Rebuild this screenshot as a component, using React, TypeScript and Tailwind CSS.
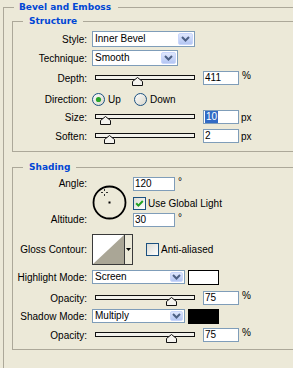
import React from 'react';

const Chevron: React.FC = () => (
    <svg width="9" height="6" viewBox="0 0 9 6">
        <path d="M1 1 L4.5 4.5 L8 1" fill="none" stroke="#4d6185" strokeWidth="2" />
    </svg>
);

const Combo: React.FC<{ value: string; className: string; btn: string }> = ({ value, className, btn }) => (
    <div className={`flex shrink-0 border border-[#7f9db9] bg-white ${className}`}>
        <span className="flex-1 self-center pl-[2px] leading-none">{value}</span>
        <span className={`m-[1px] flex items-center justify-center rounded-[2px] border border-[#c9d6fb] bg-linear-to-b from-[#dfe7fd] to-[#b4c6f3] ${btn}`}>
            <Chevron />
        </span>
    </div>
);

const Field: React.FC<{ className: string; children: React.ReactNode }> = ({ className, children }) => (
    <div className={`flex h-[14px] shrink-0 items-center border border-[#7f9db9] bg-white pl-[1px] leading-none ${className}`}>
        {children}
    </div>
);

const Slider: React.FC<{ pos: number }> = ({ pos }) => (
    <div className="relative ml-[3px] h-[14px] w-[100px] shrink-0">
        <div className="mt-[4px] h-[5px] border border-[#111] bg-[#f3f2ec]" />
        {/* thumb sits over the track */}
        <svg className="absolute top-[6px]" style={{ left: pos - 5 }} width="11" height="9" viewBox="0 0 11 9">
            <path d="M0.5 8.5 V4.5 L5.5 0.5 L10.5 4.5 V8.5 Z" fill="#f4f3ee" stroke="#111" />
        </svg>
    </div>
);

const Radio: React.FC<{ checked?: boolean }> = ({ checked }) => (
    <svg width="13" height="13" viewBox="0 0 13 13" className="shrink-0">
        <defs>
            <linearGradient id="rg" x1="0" y1="0" x2="1" y2="1">
                <stop offset="0" stopColor="#ffffff" />
                <stop offset="1" stopColor="#d6d4c8" />
            </linearGradient>
        </defs>
        <circle cx="6.5" cy="6.5" r="6" fill="url(#rg)" stroke="#1c5180" />
        {checked && <circle cx="6.5" cy="6.5" r="2.6" fill="#2aa52a" />}
    </svg>
);

const Checkbox: React.FC<{ checked?: boolean }> = ({ checked }) => (
    <div className="flex h-[13px] w-[13px] shrink-0 items-center justify-center border border-[#1c5180] bg-linear-to-br from-[#dcdcd5] to-white">
        {checked && (
            <svg width="9" height="9" viewBox="0 0 9 9">
                <path d="M1.2 4.3 L3.4 6.6 L7.8 2" fill="none" stroke="#21a121" strokeWidth="2" />
            </svg>
        )}
    </div>
);

const Label: React.FC<{ children: React.ReactNode }> = ({ children }) => (
    <div className="mr-[5px] w-[74px] shrink-0 text-right">{children}</div>
);

const legendCls = "ml-[10px] pl-[6px] pr-[6px] font-['DejaVu_Sans',sans-serif] text-[9px] font-bold leading-[14px] text-[#0046d5]";

const App: React.FC = () => {
    return (
        <div className="h-[368px] w-[293px] overflow-hidden bg-[#ece9d8] font-['Liberation_Sans',Arial,sans-serif] text-[10px] text-black">
            <fieldset className="ml-[3px] h-[420px] w-[300px] border-l border-t border-[#aca899]">
                <legend className="ml-[10px] pl-[5px] pr-[7px] font-['DejaVu_Sans',sans-serif] text-[9px] font-bold leading-[14px] text-[#0046d5]">
                    Bevel and Emboss
                </legend>

                <fieldset className="ml-[8px] w-[300px] border-b border-l border-t border-[#aca899] pb-[8px]">
                    <legend className={legendCls}>Structure</legend>

                    <div className="mt-[3px] flex h-[16px] items-center">
                        <Label>Style:</Label>
                        <Combo value="Inner Bevel" className="h-[16px] w-[103px]" btn="w-[15px]" />
                    </div>

                    <div className="mt-[3px] flex h-[16px] items-center">
                        <Label>Technique:</Label>
                        <Combo value="Smooth" className="h-[16px] w-[86px]" btn="w-[15px]" />
                    </div>

                    <div className="mt-[5px] flex h-[14px] items-center">
                        <Label>Depth:</Label>
                        <Slider pos={42} />
                        <Field className="ml-[8px] w-[36px]">411</Field>
                        <span className="ml-[3px] self-start leading-[10px]">%</span>
                    </div>

                    <div className="mt-[7px] flex h-[14px] items-center">
                        <Label>Direction:</Label>
                        <div className="flex w-[42px] items-center">
                            <Radio checked />
                            <span className="ml-[3px]">Up</span>
                        </div>
                        <Radio />
                        <span className="ml-[3px]">Down</span>
                    </div>

                    <div className="mt-[4px] flex h-[14px] items-center">
                        <Label>Size:</Label>
                        <Slider pos={10} />
                        <Field className="ml-[8px] w-[36px]">
                            <span className="bg-[#316ac5] px-[1px] py-[1px] text-white">10</span>
                        </Field>
                        <span className="ml-[2px]">px</span>
                    </div>

                    <div className="mt-[5px] flex h-[14px] items-center">
                        <Label>Soften:</Label>
                        <Slider pos={14} />
                        <Field className="ml-[8px] w-[36px]">2</Field>
                        <span className="ml-[2px]">px</span>
                    </div>
                </fieldset>

                <fieldset className="ml-[8px] mt-[8px] w-[300px] border-b border-l border-t border-[#aca899] pb-[7px]">
                    <legend className={legendCls}>Shading</legend>

                    <div className="mt-[3px] flex">
                        <div className="mr-[5px] w-[74px] shrink-0 text-right">
                            <div className="h-[14px] leading-[14px]">Angle:</div>
                            <div className="mt-[22px] h-[14px] leading-[14px]">Altitude:</div>
                        </div>
                        <svg className="mt-[8px] shrink-0" width="35" height="35" viewBox="0 0 35 35">
                            <circle cx="17.5" cy="17.5" r="16" fill="none" stroke="#000" strokeWidth="1.8" />
                            <rect x="16.5" y="16.5" width="2" height="2" fill="#000" />
                            <path d="M9 7.5 H11 M14 7.5 H16 M12.5 4 V6 M12.5 9 V11" stroke="#333" strokeWidth="1" />
                        </svg>
                        <div className="ml-[6px] flex flex-col">
                            <div className="flex h-[14px]">
                                <Field className="w-[42px]">120</Field>
                                <span className="ml-[3px] leading-[10px]">°</span>
                            </div>
                            <div className="mt-[6px] flex h-[13px] items-center">
                                <Checkbox checked />
                                <span className="ml-[2px]">Use Global Light</span>
                            </div>
                            <div className="mt-[3px] flex h-[14px]">
                                <Field className="w-[42px]">30</Field>
                                <span className="ml-[3px] leading-[10px]">°</span>
                            </div>
                        </div>
                    </div>

                    <div className="mt-[7px] flex h-[31px] items-center">
                        <Label>Gloss Contour:</Label>
                        <div className="flex h-[31px] shrink-0 border border-[#3a3a3a]">
                            <svg width="31" height="29" viewBox="0 0 31 29" className="bg-white">
                                <polygon points="0,29 31,0 31,29" fill="#aaa696" />
                            </svg>
                            <div className="flex w-[8px] items-center justify-center border-l border-[#3a3a3a]">
                                <svg width="5" height="3" viewBox="0 0 5 3">
                                    <path d="M0 0 H5 L2.5 3 Z" fill="#000" />
                                </svg>
                            </div>
                        </div>
                        <div className="ml-[13px] flex items-center">
                            <Checkbox />
                            <span className="ml-[2px]">Anti-aliased</span>
                        </div>
                    </div>

                    <div className="mt-[4px] flex h-[16px] items-center">
                        <Label>Highlight Mode:</Label>
                        <Combo value="Screen" className="h-[14px] w-[93px]" btn="w-[13px]" />
                        <div className="ml-[3px] h-[15px] w-[31px] border border-black bg-white" />
                    </div>

                    <div className="mt-[6px] flex h-[14px] items-center">
                        <Label>Opacity:</Label>
                        <Slider pos={76} />
                        <Field className="ml-[8px] w-[36px]">75</Field>
                        <span className="ml-[3px] self-start leading-[10px]">%</span>
                    </div>

                    <div className="mt-[3px] flex h-[16px] items-center">
                        <Label>Shadow Mode:</Label>
                        <Combo value="Multiply" className="h-[14px] w-[93px]" btn="w-[13px]" />
                        <div className="ml-[3px] h-[15px] w-[31px] border border-black bg-black" />
                    </div>

                    <div className="mt-[4px] flex h-[14px] items-center">
                        <Label>Opacity:</Label>
                        <Slider pos={76} />
                        <Field className="ml-[8px] w-[36px]">75</Field>
                        <span className="ml-[3px] self-start leading-[10px]">%</span>
                    </div>
                </fieldset>
            </fieldset>
        </div>
    );
};

export default App;
